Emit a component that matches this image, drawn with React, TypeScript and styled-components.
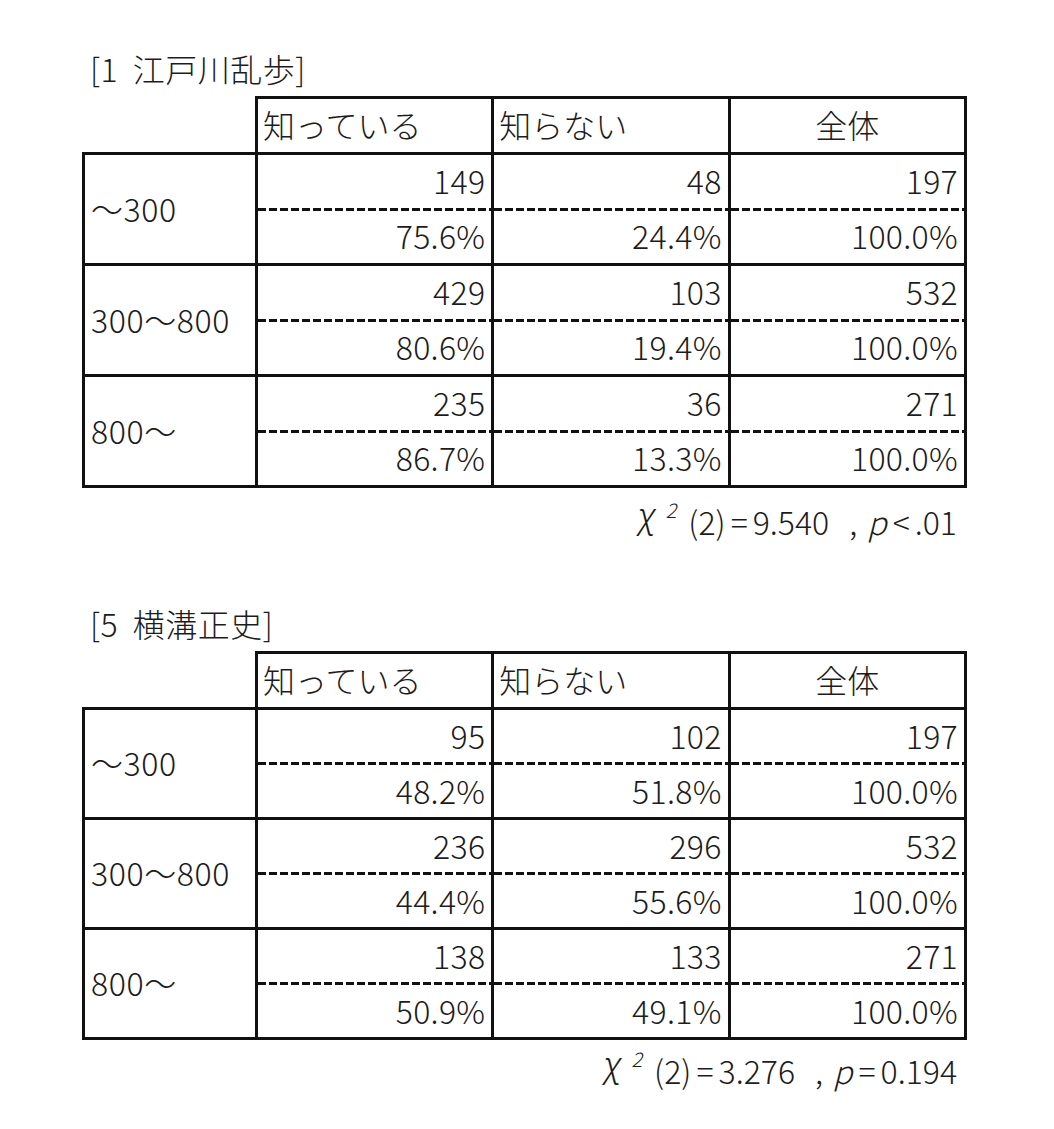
import styled, { createGlobalStyle } from "styled-components";

type Row = { label: string; counts: number[]; rates: string[] };
type Block = {
  title: string;
  rowHeight: number;
  gap: number;
  statGap: number;
  rows: Row[];
  value: string;
  pOp: string;
  pValue: string;
};

const blocks: Block[] = [
  {
    title: "[1 江戸川乱歩]",
    rowHeight: 111,
    gap: 0,
    statGap: 13,
    rows: [
      { label: "〜300", counts: [149, 48, 197], rates: ["75.6%", "24.4%", "100.0%"] },
      { label: "300〜800", counts: [429, 103, 532], rates: ["80.6%", "19.4%", "100.0%"] },
      { label: "800〜", counts: [235, 36, 271], rates: ["86.7%", "13.3%", "100.0%"] },
    ],
    value: "9.540",
    pOp: "<",
    pValue: ".01",
  },
  {
    title: "[5 横溝正史]",
    rowHeight: 110,
    gap: 56,
    statGap: 10,
    rows: [
      { label: "〜300", counts: [95, 102, 197], rates: ["48.2%", "51.8%", "100.0%"] },
      { label: "300〜800", counts: [236, 296, 532], rates: ["44.4%", "55.6%", "100.0%"] },
      { label: "800〜", counts: [138, 133, 271], rates: ["50.9%", "49.1%", "100.0%"] },
    ],
    value: "3.276",
    pOp: "=",
    pValue: "0.194",
  },
];

const heads = ["知っている", "知らない", "全体"];

export default function App() {
  return (
    <Page>
      <GlobalStyle />
      {blocks.map((b) => (
        <Section key={b.title} $gap={b.gap}>
          <Title>{b.title}</Title>
          <HeadRow>
            <Corner />
            {heads.map((h, i) => (
              <HeadCell key={h} $center={i === 2}>{h}</HeadCell>
            ))}
          </HeadRow>
          {b.rows.map((r, ri) => (
            <Group key={r.label} $h={b.rowHeight} $last={ri === b.rows.length - 1}>
              <Label>{r.label}</Label>
              {r.counts.map((c, ci) => (
                <ValueCell key={ci}>
                  <Half>{c}</Half>
                  <Dash />
                  <Half>{r.rates[ci]}</Half>
                </ValueCell>
              ))}
            </Group>
          ))}
          <Stat $gap={b.statGap}>
            <Chi>χ</Chi>
            <Sup>2</Sup>
            <span>(2)</span>
            <Op>=</Op>
            <span>{b.value}</span>
            <Comma>,</Comma>
            <PVar>p</PVar>
            <Op>{b.pOp}</Op>
            <span>{b.pValue}</span>
          </Stat>
        </Section>
      ))}
    </Page>
  );
}

const GlobalStyle = createGlobalStyle`
  body {
    margin: 0;
    background: #ffffff;
    color: #1c1c1c;
    font-family: "Noto Sans CJK JP", "Noto Sans", sans-serif;
  }
`;

const Page = styled.div`
  width: 885px;
  padding: 48px 0 30px 82px;
`;

const Section = styled.section<{ $gap: number }>`
  margin-top: ${(p) => p.$gap}px;
`;

const Title = styled.h2`
  margin: 0 0 8px 8px;
  font-size: 32px;
  font-weight: 300;
  line-height: 40px;
  word-spacing: 7px;
  letter-spacing: 0.5px;
`;

const HeadRow = styled.div`
  display: flex;
  height: 56px;
`;

const Corner = styled.div`
  width: 173px;
  flex: none;
`;

const HeadCell = styled.div<{ $center: boolean }>`
  flex: 1 1 0;
  box-sizing: border-box;
  display: flex;
  align-items: center;
  justify-content: ${(p) => (p.$center ? "center" : "flex-start")};
  padding: 0 5px 3px;
  border-top: 3px solid #111;
  border-left: 3px solid #111;
  font-size: 32px;
  font-weight: 300;
  line-height: 1;
  &:last-child {
    border-right: 3px solid #111;
  }
`;

const Group = styled.div<{ $h: number; $last: boolean }>`
  display: flex;
  box-sizing: border-box;
  height: ${(p) => p.$h + (p.$last ? 3 : 0)}px;
  border: 3px solid #111;
  border-bottom-width: ${(p) => (p.$last ? 3 : 0)}px;
`;

const Label = styled.div`
  width: 170px;
  flex: none;
  display: flex;
  align-items: center;
  padding: 0 0 3px 6px;
  box-sizing: border-box;
  font-size: 32px;
  font-weight: 300;
  line-height: 1;
  letter-spacing: 0.6px;
`;

const ValueCell = styled.div`
  flex: 1 1 0;
  display: grid;
  grid-template-rows: 1fr 3px 1fr;
  border-left: 3px solid #111;
`;

const Half = styled.div`
  display: flex;
  align-items: center;
  justify-content: flex-end;
  padding: 0 6px 3px 0;
  font-size: 32px;
  font-weight: 300;
  line-height: 1;
  letter-spacing: 0.3px;
`;

const Dash = styled.div`
  background: repeating-linear-gradient(to right, #111 0 8px, transparent 8px 11px);
`;

const Stat = styled.div<{ $gap: number }>`
  display: flex;
  justify-content: flex-end;
  align-items: baseline;
  margin-top: ${(p) => p.$gap}px;
  padding-right: 10px;
  font-size: 32px;
  font-weight: 300;
  line-height: 40px;
  white-space: pre;
`;

const Chi = styled.span`
  font-family: "Noto Sans", "DejaVu Sans", sans-serif;
  font-style: italic;
  font-weight: 300;
  font-size: 35px;
  position: relative;
  top: -7px;
  margin-right: 9px;
`;

const Sup = styled.span`
  font-size: 20px;
  font-style: italic;
  position: relative;
  top: -17px;
  margin-right: 12px;
`;

const Op = styled.span`
  margin: 0 5px;
`;

const Comma = styled.span`
  margin: 0 10px 0 20px;
`;

const PVar = styled.span`
  font-style: italic;
  margin-right: 1px;
`;
